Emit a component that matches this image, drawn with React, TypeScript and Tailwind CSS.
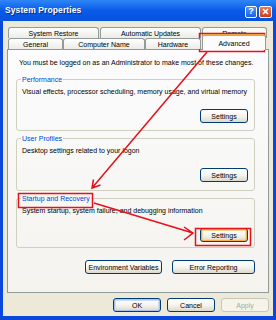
const btn =
  "h-[14px] w-[48px] border border-[#003c74] rounded-[3px] bg-gradient-to-b from-white via-[#f5f4ef] to-[#dcd9cd] text-black flex items-center justify-center leading-none";

function Group({ title, text, pb }: { title: string; text: string; pb: string }) {
  return (
    <fieldset className={`border border-[#d0d0bf] rounded-[3px] pl-[4px] pr-[6px] ${pb}`}>
      <legend className="px-[1px] text-[#0046d5] leading-[9px]">{title}</legend>
      <div className="mt-[3px] pl-[1px] leading-[9px] whitespace-nowrap">{text}</div>
      <div className="mt-[13px] flex justify-end">
        <div className={btn}>Settings</div>
      </div>
    </fieldset>
  );
}

function LastGroup() {
  return (
    <fieldset className="border border-[#d0d0bf] rounded-[3px] pl-[4px] pr-[6px] pb-[5px]">
      <legend className="px-[1px] text-[#0046d5] leading-[9px]">Startup and Recovery</legend>
      <div className="mt-[3px] pl-[1px] leading-[9px] whitespace-nowrap">
        System startup, system failure, and debugging information
      </div>
      <div className="mt-[13px] flex justify-end">
        <div className={`${btn} shadow-[inset_0_0_0_1px_#f5b04a,inset_0_0_0_2px_#fdd68f]`}>Settings</div>
      </div>
    </fieldset>
  );
}

const tab =
  "h-[11px] border border-b-0 border-[#919b9c] rounded-t-[3px] bg-gradient-to-b from-white to-[#ecebe6] flex items-center justify-center leading-none whitespace-nowrap";

export default function App() {
  return (
    <div className="relative w-[276px] h-[320px] bg-[#0a48dc] flex flex-col text-[7px] text-black font-['Liberation_Sans',Arial,sans-serif]">
      {/* title bar */}
      <div className="h-[21px] flex items-center bg-gradient-to-b from-[#2f86f6] via-[#0a5ae8] to-[#0552dd] pl-[5px] pr-[4px]">
        <span className="text-white font-bold text-[8.5px] tracking-[0.1px] [text-shadow:1px_1px_0_#0a2e8c]">
          System Properties
        </span>
        <div className="ml-auto flex gap-[2px] mt-[2px]">
          <div className="w-[12px] h-[12px] rounded-[2px] border border-white bg-gradient-to-b from-[#4f94f8] to-[#1c5fe6] text-white font-bold text-[9px] leading-none flex items-center justify-center">
            ?
          </div>
          <div className="w-[13px] h-[12px] rounded-[2px] border border-white bg-gradient-to-b from-[#e8795a] to-[#cc3b16] flex items-center justify-center">
            <svg width="7" height="7" viewBox="0 0 7 7">
              <path d="M1 1 L6 6 M6 1 L1 6" stroke="white" strokeWidth="1.6" />
            </svg>
          </div>
        </div>
      </div>

      {/* body */}
      <div className="mx-[3px] mb-[4px] flex-1 bg-[#ece9d8] flex flex-col pt-[6px]">
        <div className="h-[11px] flex pl-[5px] gap-[1px]">
          <div className={`${tab} w-[91px]`}>System Restore</div>
          <div className={`${tab} w-[101px]`}>Automatic Updates</div>
          <div className={`${tab} w-[65px]`}>Remote</div>
        </div>
        <div className="h-[11px] flex pl-[5px] relative z-10">
          <div className={`${tab} w-[55px]`}>General</div>
          <div className={`${tab} w-[82px]`}>Computer Name</div>
          <div className={`${tab} w-[56px]`}>Hardware</div>
          <div className="ml-[1px] -mt-[4px] h-[16px] w-[64px] border border-b-0 border-[#919b9c] border-t-2 border-t-[#f1a13a] rounded-t-[3px] bg-[#fcfcfe] flex items-center justify-center leading-none">
            Advanced
          </div>
        </div>
        <div className="mx-[4px] h-[244px] border border-[#919b9c] bg-gradient-to-b from-[#fcfcfe] to-[#f4f3ee] pt-[8px] pl-[8px] pr-[13px] flex flex-col">
          <div className="leading-[9px] pl-[3px] whitespace-nowrap">
            You must be logged on as an Administrator to make most of these changes.
          </div>
          <div className="mt-[8px]">
            <Group
              title="Performance"
              text="Visual effects, processor scheduling, memory usage, and virtual memory"
              pb="pb-[7px]"
            />
          </div>
          <div className="mt-[3px]">
            <Group title="User Profiles" text="Desktop settings related to your logon" pb="pb-[8px]" />
          </div>
          <div className="mt-[3px]">
            <LastGroup />
          </div>
          <div className="mt-[12px] flex justify-end gap-[10px]">
            <div className={`${btn} h-[13px] w-[77px]`}>Environment Variables</div>
            <div className={`${btn} h-[13px] w-[83px]`}>Error Reporting</div>
          </div>
        </div>
        <div className="mt-[5px] flex justify-end gap-[6px] pr-[4px]">
          <div className={`${btn} shadow-[inset_0_0_0_1px_#a9c4f2,inset_0_0_0_2px_#cddcf7]`}>OK</div>
          <div className={btn}>Cancel</div>
          <div className="h-[14px] w-[48px] border border-[#c9c7ba] rounded-[3px] bg-[#f5f4ea] text-[#aca899] flex items-center justify-center leading-none">
            Apply
          </div>
        </div>
      </div>

      {/* red annotations */}
      <svg className="absolute inset-0 pointer-events-none" width="276" height="320" viewBox="0 0 276 320">
        <g stroke="#e8101a" strokeWidth="1.5" fill="none">
          <rect x="199.5" y="33.5" width="65" height="18" />
          <rect x="18.5" y="193.5" width="74" height="14" />
          <rect x="195.5" y="228.5" width="55" height="17" />
          <path d="M207 52 L92 188 M93.5 179.5 L92 188 L100.5 185" />
          <path d="M94 203 L193 233 M184 227 L193 233 L184 240" />
        </g>
      </svg>
    </div>
  );
}
